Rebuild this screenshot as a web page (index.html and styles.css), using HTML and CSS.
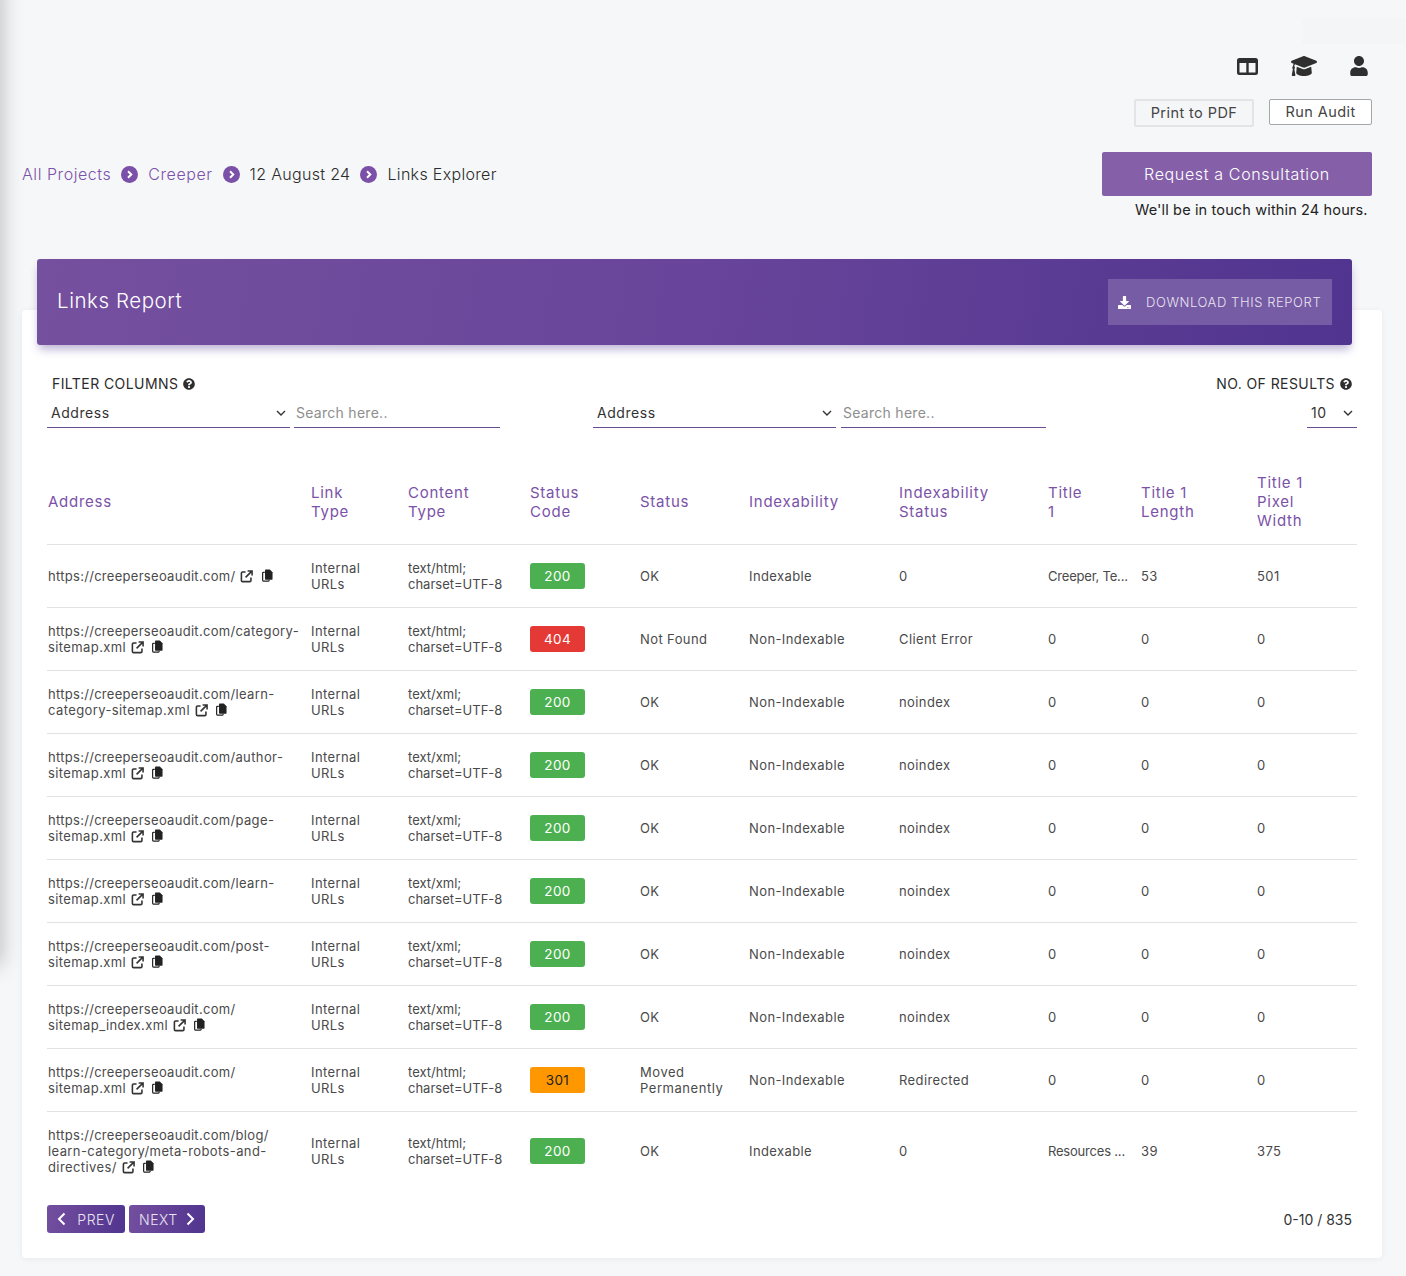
FILE: index.html
```html
<!DOCTYPE html>
<html lang="en">
<head>
<meta charset="utf-8">
<title>Links Explorer</title>
<link rel="stylesheet" href="styles.css">
</head>
<body>
<svg class="defs" width="0" height="0" aria-hidden="true">
  <symbol id="i-ext" viewBox="0 0 14 14"><path d="M6 2.2H2.8A1.3 1.3 0 0 0 1.5 3.5v7.7a1.3 1.3 0 0 0 1.3 1.3h7.7a1.3 1.3 0 0 0 1.300-1.300V8" fill="none" stroke="currentColor" stroke-width="1.700"/><path d="M8.200 1h4.800v4.800M12.500 1.500 6 8" fill="none" stroke="currentColor" stroke-width="1.700"/></symbol>
  <symbol id="i-copy" viewBox="0 0 12 14"><path d="M3 3.500H1.500a.8.8 0 0 0-.8.800v8a.8.8 0 0 0 .8.800H7a.8.8 0 0 0 .8-.8V11.500" fill="none" stroke="currentColor" stroke-width="1.300"/><path d="M4 .5h4.500L11.500 3.500v7.300a.7.7 0 0 1-.7.700H4a.7.7 0 0 1-.7-.7V1.200A.7.7 0 0 1 4 .5z" fill="currentColor"/></symbol>
  <symbol id="i-q" viewBox="0 0 512 512"><path fill="currentColor" d="M504 256c0 136.997-111.043 248-248 248S8 392.997 8 256C8 119.083 119.043 8 256 8s248 111.083 248 248zM262.655 90c-54.497 0-89.255 22.957-116.549 63.758-3.536 5.286-2.353 12.415 2.715 16.258l34.699 26.31c5.205 3.947 12.621 3.008 16.665-2.122 17.864-22.658 30.113-35.797 57.303-35.797 20.429 0 45.698 13.148 45.698 32.958 0 14.976-12.363 22.667-32.534 33.976C247.128 238.528 216 254.941 216 296v4c0 6.627 5.373 12 12 12h56c6.627 0 12-5.373 12-12v-1.333c0-28.462 83.186-29.647 83.186-106.667 0-58.002-60.165-102-116.531-102zM256 338c-25.365 0-46 20.635-46 46 0 25.364 20.635 46 46 46s46-20.636 46-46c0-25.365-20.635-46-46-46z"/></symbol>
  <symbol id="i-crumb" viewBox="0 0 17 17"><circle cx="8.500" cy="8.500" r="8.500" fill="currentColor"/><path d="M7 5.200 10.300 8.500 7 11.800" fill="none" stroke="#fff" stroke-width="2"/></symbol>
  <symbol id="i-down" viewBox="0 0 10 6"><path d="M1 1 5 5 9 1" fill="none" stroke="currentColor" stroke-width="1.400"/></symbol>
</svg>

<div class="side-shadow"></div>
<div class="ghost"></div>

<header class="top">
  <div class="tools">
    <svg class="tool tool-columns" viewBox="0 0 21 17"><path fill="#2f2f2f" fill-rule="evenodd" d="M2.500 0h16A2.500 2.500 0 0 1 21 2.500v12a2.500 2.500 0 0 1-2.500 2.500h-16A2.500 2.500 0 0 1 0 14.500v-12A2.500 2.500 0 0 1 2.500 0zM2.500 5v9.500h6.800V5zM11.700 5v9.500h6.800V5z"/></svg>
    <svg class="tool tool-cap" viewBox="0 64 640 384" preserveAspectRatio="none"><path fill="#2f2f2f" d="M622.34 153.2L343.4 67.5c-15.2-4.67-31.6-4.67-46.79 0L17.66 153.2c-23.54 7.23-23.54 38.36 0 45.59l48.63 14.94c-10.67 13.19-17.23 29.28-17.88 46.9C38.78 266.15 32 276.11 32 288c0 10.78 5.68 19.85 13.86 25.65L20.33 428.53C18.11 438.52 25.71 448 35.94 448h56.11c10.24 0 17.84-9.48 15.62-19.47L82.14 313.65C90.32 307.85 96 298.78 96 288c0-11.57-6.47-21.25-15.66-26.87.76-15.02 8.44-28.3 20.69-36.72L296.6 284.5c9.06 2.78 26.44 6.25 46.79 0l278.95-85.7c23.55-7.24 23.55-38.36 0-45.6zM352.79 315.09c-28.53 8.76-52.84 3.92-65.59 0l-145.02-44.55L128 384c0 35.35 85.96 64 192 64s192-28.65 192-64l-14.18-113.47-145.03 44.56z"/></svg>
    <svg class="tool tool-user" viewBox="0 0 448 512"><path fill="#2f2f2f" d="M224 256c70.7 0 128-57.3 128-128S294.7 0 224 0 96 57.3 96 128s57.3 128 128 128zm89.6 32h-16.700c-22.200 10.200-46.900 16-72.900 16s-50.600-5.800-72.900-16h-16.700C60.200 288 0 348.200 0 422.400V464c0 26.500 21.500 48 48 48h352c26.500 0 48-21.500 48-48v-41.600c0-74.200-60.200-134.400-134.400-134.400z"/></svg>
  </div>
  <div class="actions">
    <button class="btn-print">Print to PDF</button>
    <button class="btn-run">Run Audit</button>
  </div>
  <div class="crumb-row">
    <nav class="crumbs">
      <a class="crumb-link">All Projects</a>
      <svg class="crumb-sep"><use href="#i-crumb"/></svg>
      <a class="crumb-link">Creeper</a>
      <svg class="crumb-sep"><use href="#i-crumb"/></svg>
      <span class="crumb-text">12 August 24</span>
      <svg class="crumb-sep"><use href="#i-crumb"/></svg>
      <span class="crumb-text">Links Explorer</span>
    </nav>
    <div class="consult">
      <button class="btn-consult">Request a Consultation</button>
      <p class="consult-note">We'll be in touch within 24 hours.</p>
    </div>
  </div>
</header>

<main class="card">
  <div class="banner">
    <h1 class="banner-title">Links Report</h1>
    <a class="download">
      <svg class="download-icon" viewBox="0 0 512 512"><path fill="currentColor" d="M216 0h80c13.300 0 24 10.700 24 24v168h87.700c17.800 0 26.700 21.500 14.100 34.100L269.700 378.300c-7.500 7.500-19.800 7.500-27.300 0L90.100 226.100c-12.600-12.600-3.700-34.100 14.100-34.100H192V24c0-13.300 10.700-24 24-24zm296 376v112c0 13.300-10.700 24-24 24H24c-13.300 0-24-10.700-24-24V376c0-13.300 10.700-24 24-24h146.700l49 49c20.100 20.100 52.500 20.100 72.600 0l49-49H488c13.300 0 24 10.700 24 24zm-124 88c0-11-9-20-20-20s-20 9-20 20 9 20 20 20 20-9 20-20zm64 0c0-11-9-20-20-20s-20 9-20 20 9 20 20 20 20-9 20-20z"/></svg>
      <span>DOWNLOAD THIS REPORT</span>
    </a>
  </div>

  <div class="filter-labels">
    <span class="filter-label">FILTER COLUMNS <svg class="q"><use href="#i-q"/></svg></span>
    <span class="filter-label">NO. OF RESULTS <svg class="q"><use href="#i-q"/></svg></span>
  </div>
  <div class="filters">
    <div class="select select-a">Address <svg class="chev"><use href="#i-down"/></svg></div>
    <input class="search search-a" placeholder="Search here..">
    <div class="select select-b">Address <svg class="chev"><use href="#i-down"/></svg></div>
    <input class="search search-b" placeholder="Search here..">
    <div class="select select-n">10 <svg class="chev"><use href="#i-down"/></svg></div>
  </div>

  <table class="links">
    <colgroup>
      <col class="c1"><col class="c2"><col class="c3"><col class="c4"><col class="c5"><col class="c6"><col class="c7"><col class="c8"><col class="c9"><col class="c10">
    </colgroup>
    <thead>
      <tr>
        <th>Address</th><th>Link<br>Type</th><th>Content<br>Type</th><th>Status<br>Code</th><th>Status</th><th>Indexability</th><th>Indexability<br>Status</th><th>Title<br>1</th><th>Title 1<br>Length</th><th>Title 1<br>Pixel<br>Width</th>
      </tr>
    </thead>
    <tbody>
      <tr>
        <td><span class="host">https://creeperseoaudit.com/</span> <svg class="ext"><use href="#i-ext"/></svg> <svg class="copy"><use href="#i-copy"/></svg></td>
        <td>Internal<br>URLs</td><td>text/html;<br>charset=UTF-8</td><td><span class="badge ok">200</span></td><td>OK</td><td>Indexable</td><td>0</td><td class="trunc">Creeper, Te...</td><td>53</td><td>501</td>
      </tr>
      <tr>
        <td><span class="host">https://creeperseoaudit.com/</span>category-<br>sitemap.xml <svg class="ext"><use href="#i-ext"/></svg> <svg class="copy"><use href="#i-copy"/></svg></td>
        <td>Internal<br>URLs</td><td>text/html;<br>charset=UTF-8</td><td><span class="badge err">404</span></td><td>Not Found</td><td>Non-Indexable</td><td>Client Error</td><td>0</td><td>0</td><td>0</td>
      </tr>
      <tr>
        <td><span class="host">https://creeperseoaudit.com/</span>learn-<br>category-sitemap.xml <svg class="ext"><use href="#i-ext"/></svg> <svg class="copy"><use href="#i-copy"/></svg></td>
        <td>Internal<br>URLs</td><td>text/xml;<br>charset=UTF-8</td><td><span class="badge ok">200</span></td><td>OK</td><td>Non-Indexable</td><td>noindex</td><td>0</td><td>0</td><td>0</td>
      </tr>
      <tr>
        <td><span class="host">https://creeperseoaudit.com/</span>author-<br>sitemap.xml <svg class="ext"><use href="#i-ext"/></svg> <svg class="copy"><use href="#i-copy"/></svg></td>
        <td>Internal<br>URLs</td><td>text/xml;<br>charset=UTF-8</td><td><span class="badge ok">200</span></td><td>OK</td><td>Non-Indexable</td><td>noindex</td><td>0</td><td>0</td><td>0</td>
      </tr>
      <tr>
        <td><span class="host">https://creeperseoaudit.com/</span>page-<br>sitemap.xml <svg class="ext"><use href="#i-ext"/></svg> <svg class="copy"><use href="#i-copy"/></svg></td>
        <td>Internal<br>URLs</td><td>text/xml;<br>charset=UTF-8</td><td><span class="badge ok">200</span></td><td>OK</td><td>Non-Indexable</td><td>noindex</td><td>0</td><td>0</td><td>0</td>
      </tr>
      <tr>
        <td><span class="host">https://creeperseoaudit.com/</span>learn-<br>sitemap.xml <svg class="ext"><use href="#i-ext"/></svg> <svg class="copy"><use href="#i-copy"/></svg></td>
        <td>Internal<br>URLs</td><td>text/xml;<br>charset=UTF-8</td><td><span class="badge ok">200</span></td><td>OK</td><td>Non-Indexable</td><td>noindex</td><td>0</td><td>0</td><td>0</td>
      </tr>
      <tr>
        <td><span class="host">https://creeperseoaudit.com/</span>post-<br>sitemap.xml <svg class="ext"><use href="#i-ext"/></svg> <svg class="copy"><use href="#i-copy"/></svg></td>
        <td>Internal<br>URLs</td><td>text/xml;<br>charset=UTF-8</td><td><span class="badge ok">200</span></td><td>OK</td><td>Non-Indexable</td><td>noindex</td><td>0</td><td>0</td><td>0</td>
      </tr>
      <tr>
        <td><span class="host">https://creeperseoaudit.com/</span><br>sitemap_index.xml <svg class="ext"><use href="#i-ext"/></svg> <svg class="copy"><use href="#i-copy"/></svg></td>
        <td>Internal<br>URLs</td><td>text/xml;<br>charset=UTF-8</td><td><span class="badge ok">200</span></td><td>OK</td><td>Non-Indexable</td><td>noindex</td><td>0</td><td>0</td><td>0</td>
      </tr>
      <tr>
        <td><span class="host">https://creeperseoaudit.com/</span><br>sitemap.xml <svg class="ext"><use href="#i-ext"/></svg> <svg class="copy"><use href="#i-copy"/></svg></td>
        <td>Internal<br>URLs</td><td>text/html;<br>charset=UTF-8</td><td><span class="badge warn">301</span></td><td class="status-wide">Moved<br>Permanently</td><td>Non-Indexable</td><td>Redirected</td><td>0</td><td>0</td><td>0</td>
      </tr>
      <tr class="last">
        <td><span class="host">https://creeperseoaudit.com/</span>blog/<br>learn-category/meta-robots-and-<br>directives/ <svg class="ext"><use href="#i-ext"/></svg> <svg class="copy"><use href="#i-copy"/></svg></td>
        <td>Internal<br>URLs</td><td>text/html;<br>charset=UTF-8</td><td><span class="badge ok">200</span></td><td>OK</td><td>Indexable</td><td>0</td><td class="trunc">Resources ...</td><td>39</td><td>375</td>
      </tr>
    </tbody>
  </table>

  <div class="pager">
    <div class="pager-btns">
      <button class="page-btn"><svg class="page-chev" viewBox="0 0 9 14"><path d="M7.500 1.500 2 7l5.500 5.500" fill="none" stroke="currentColor" stroke-width="2"/></svg>PREV</button>
      <button class="page-btn"> NEXT<svg class="page-chev" viewBox="0 0 9 14"><path d="M1.500 1.500 7 7l-5.500 5.500" fill="none" stroke="currentColor" stroke-width="2"/></svg></button>
    </div>
    <span class="page-count">0-10 / 835</span>
  </div>
</main>
</body>
</html>
```

FILE: styles.css
```css
* { box-sizing: border-box; }
html, body { margin: 0; }
body {
  height: 1276px;
  overflow: hidden;
  position: relative;
  background: #f6f7f9;
  color: #333;
  font-family: Inter, "Liberation Sans", sans-serif;
  letter-spacing: .035em;
}
.defs { position: absolute; }
.side-shadow {
  position: absolute;
  left: -20px;
  top: -20px;
  width: 20px;
  height: 985px;
  box-shadow: 0 0 22px rgba(0, 0, 0, .28);
}
.ghost {
  position: absolute;
  right: 0;
  top: 18px;
  width: 104px;
  height: 26px;
  background: #f4f5f7;
  border-radius: 4px;
}

.top { padding: 56px 34px 0 22px; }
.tools { display: flex; justify-content: flex-end; align-items: center; height: 20px; padding-right: 4px; }
.tool { display: block; color: #2f2f2f; }
.tool-columns { width: 21px; height: 17px; margin-right: 33px; }
.tool-cap { width: 26px; height: 20px; margin-right: 33px; }
.tool-user { width: 18px; height: 20px; }

.actions { display: flex; justify-content: flex-end; align-items: flex-start; gap: 15px; margin-top: 23px; }
.actions button { font: inherit; letter-spacing: .03em; color: #444; font-size: 14.500px; border-radius: 2px; padding: 0 0 2px; }
.btn-print { width: 120px; height: 28px; background: #f5f6f8; border: 2px solid #e3e4e7; }
.btn-run { width: 103px; height: 26px; background: #fff; border: 1px solid #a6a6a6; }

.crumb-row { display: flex; justify-content: space-between; align-items: flex-start; margin-top: 25px; }
.crumbs { display: flex; align-items: center; height: 44px; font-size: 16px; font-weight: 300; color: #2b2b2b; }
.crumb-link { color: #7b52a8; }
.crumb-text { letter-spacing: .02em; }
.crumb-sep { width: 17px; height: 17px; margin: 0 10px; color: #7a50a8; }
.consult { width: 270px; }
.btn-consult {
  display: block;
  width: 100%;
  height: 44px;
  padding: 0;
  background: #8560a8;
  border: 0;
  border-radius: 2px;
  color: #fff;
  font: inherit;
  font-size: 16px;
  font-weight: 300;
  letter-spacing: .04em;
}
.consult-note { margin: 5px 0 0; padding-left: 33px; font-size: 14.500px; line-height: 18px; color: #222; white-space: nowrap; letter-spacing: .01em; }

.card {
  margin: 91px 24px 0 22px;
  height: 948px;
  background: #fff;
  border-radius: 4px;
  box-shadow: 0 1px 6px rgba(0, 0, 0, .06);
  padding: 0 25px;
}
.banner {
  display: flex;
  justify-content: space-between;
  align-items: center;
  position: relative;
  top: -51px;
  height: 86px;
  margin: 0 5px 0 -10px;
  padding: 0 20px;
  border-radius: 3px;
  background: linear-gradient(100deg, #75509f 0%, #68459a 50%, #50348f 100%);
  box-shadow: 0 6px 10px -2px rgba(80, 52, 143, .4);
  color: #fff;
}
.banner-title { margin: 0 0 4px; font-size: 20.500px; font-weight: 300; }
.download { display: flex; align-items: center; width: 224px; height: 46px; padding-left: 10px; background: #765ba5; color: #e9e4f0; font-size: 13px; font-weight: 300; white-space: nowrap; letter-spacing: .045em; }
.download-icon { width: 13px; height: 13px; margin-right: 15px; color: #fff; }

.filter-labels { display: flex; justify-content: space-between; margin-top: -21px; padding: 0 5px; font-size: 14px; line-height: 18px; color: #2b2b2b; letter-spacing: .03em; }
.filter-label { display: flex; align-items: center; gap: 5px; }
.q { width: 12px; height: 12px; color: #2f2f2f; }
.filters { display: flex; margin-top: 5px; height: 30px; font-size: 14px; color: #333; }
.select { display: flex; align-items: center; justify-content: space-between; height: 30px; padding: 0 4px; border-bottom: 1px solid #6a4c96; }
.select-a { width: 243px; }
.select-b { width: 243px; margin-left: 93px; }
.select-n { width: 50px; margin-left: auto; }
.chev { width: 10px; height: 6px; color: #333; }
.search { height: 30px; padding: 0 2px; border: 0; border-bottom: 1px solid #6a4c96; background: transparent; font: inherit; letter-spacing: .02em; outline: 0; }
.search::placeholder { color: #8e8e8e; opacity: 1; }
.search-a { width: 206px; margin-left: 4px; }
.search-b { width: 205px; margin-left: 5px; }

.links { width: 1310px; margin-top: 31px; table-layout: fixed; border-collapse: collapse; }
.c1 { width: 263px; } .c2 { width: 97px; } .c3 { width: 123px; } .c4 { width: 109px; } .c5 { width: 110px; }
.c6 { width: 149px; } .c7 { width: 149px; } .c8 { width: 93px; } .c9 { width: 116px; } .c10 { width: 101px; }
.links th { height: 85px; padding: 1px 0 0 1px; text-align: left; vertical-align: middle; font-size: 15px; line-height: 19px; font-weight: 400; color: #7b52a8; border-bottom: 1px solid #e2e2e2; letter-spacing: .05em; }
.links td { height: 63px; padding: 0 0 0 1px; vertical-align: middle; font-size: 13px; line-height: 16px; color: #4a4a4a; border-bottom: 1px solid #e2e2e2; white-space: nowrap; letter-spacing: .4px; }
.links .last td { border-bottom: 0; height: 79px; }
.links th:nth-child(4), .links td:nth-child(4) { padding-left: 0; }
.links th:nth-child(6), .links td:nth-child(6) { padding-left: 0; }
.links td:nth-child(3) { letter-spacing: 0; }
.links td.trunc { letter-spacing: -.2px; }
.links td.status-wide { letter-spacing: .55px; }
.host { letter-spacing: .29px; }
.ext { width: 13px; height: 13px; margin: 0 2px 0 1px; color: #333; vertical-align: -2px; }
.copy { width: 11px; height: 13px; color: #222; vertical-align: -1px; margin-left: 2px; }
.badge { display: block; width: 55px; height: 26px; line-height: 26px; text-align: center; border-radius: 3px; color: #fff; font-size: 13.500px; }
.ok { background: #4cb050; }
.err { background: #e53935; }
.warn { background: #ff9800; color: #222; }

.pager { display: flex; justify-content: space-between; align-items: center; margin-top: 15px; padding-right: 5px; }
.pager-btns { display: flex; gap: 4px; }
.page-btn { display: flex; align-items: center; justify-content: space-between; height: 28px; padding: 0 10px; border: 0; border-radius: 3px; background: linear-gradient(100deg, #744f9f, #50348f); color: #ebe6f2; font: inherit; font-size: 14px; font-weight: 300; letter-spacing: inherit; }
.page-btn:first-child { width: 78px; }
.page-btn:last-child { width: 76px; }
.page-chev { width: 9px; height: 14px; color: #fff; }
.page-count { font-size: 14px; color: #333; letter-spacing: 0; }
```
